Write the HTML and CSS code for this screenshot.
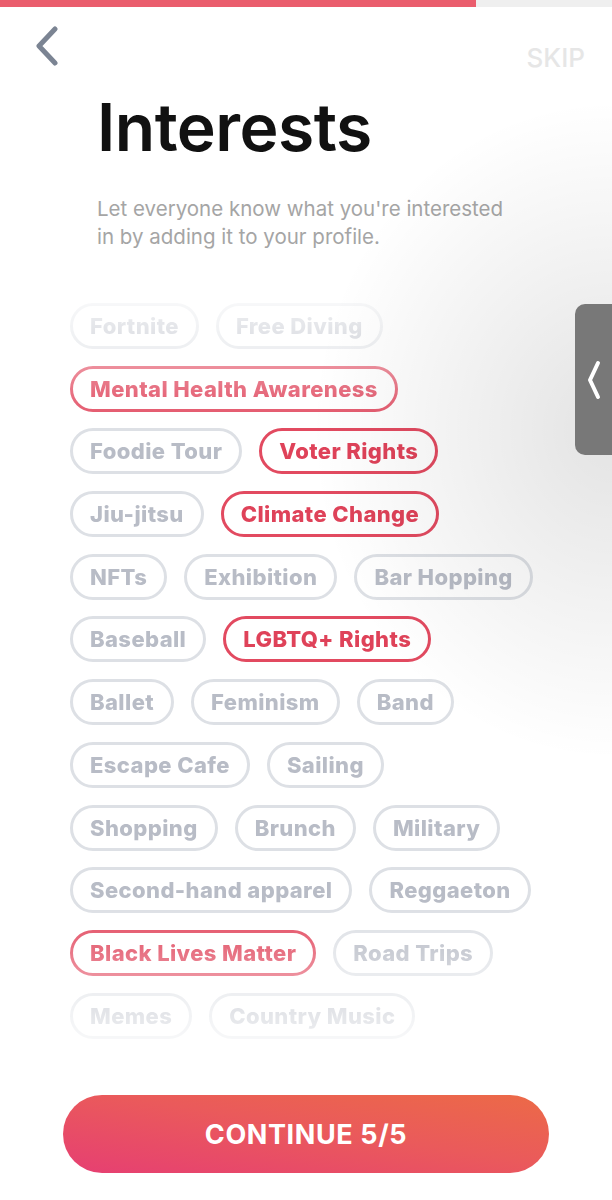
FILE: index.html
```html
<!DOCTYPE html>
<html lang="en">
  <head>
    <meta charset="UTF-8" />
    <meta name="viewport" content="width=device-width, initial-scale=1.0" />
    <title>Interests</title>
    <link rel="stylesheet" href="styles.css">
  </head>
  <body>
    <div class="screen">
      <!-- Step progress -->
      <div class="progress"><div class="progress-fill"></div></div>

      <!-- Top bar -->
      <div class="top-bar">
        <button class="back-btn" aria-label="Back">
          <svg width="30" height="40" viewBox="0 0 30 40">
            <polyline points="19,3 3,20 19,37" fill="none" stroke="#7b8493" stroke-width="5" stroke-linecap="round" stroke-linejoin="round" />
          </svg>
        </button>
        <span class="skip">SKIP</span>
      </div>

      <!-- Heading -->
      <div class="intro">
        <h1>Interests</h1>
        <p class="lead">Let everyone know what you're interested in by adding it to your profile.</p>
      </div>

      <!-- Interest chips -->
      <div class="chips">
        <div class="chip-row">
          <span class="chip">Fortnite</span>
          <span class="chip">Free Diving</span>
        </div>
        <div class="chip-row">
          <span class="chip selected">Mental Health Awareness</span>
        </div>
        <div class="chip-row">
          <span class="chip">Foodie Tour</span>
          <span class="chip selected">Voter Rights</span>
        </div>
        <div class="chip-row">
          <span class="chip">Jiu-jitsu</span>
          <span class="chip selected">Climate Change</span>
        </div>
        <div class="chip-row">
          <span class="chip">NFTs</span>
          <span class="chip">Exhibition</span>
          <span class="chip">Bar Hopping</span>
        </div>
        <div class="chip-row">
          <span class="chip">Baseball</span>
          <span class="chip selected">LGBTQ+ Rights</span>
        </div>
        <div class="chip-row">
          <span class="chip">Ballet</span>
          <span class="chip">Feminism</span>
          <span class="chip">Band</span>
        </div>
        <div class="chip-row">
          <span class="chip">Escape Cafe</span>
          <span class="chip">Sailing</span>
        </div>
        <div class="chip-row">
          <span class="chip">Shopping</span>
          <span class="chip">Brunch</span>
          <span class="chip">Military</span>
        </div>
        <div class="chip-row">
          <span class="chip">Second-hand apparel</span>
          <span class="chip">Reggaeton</span>
        </div>
        <div class="chip-row">
          <span class="chip selected">Black Lives Matter</span>
          <span class="chip">Road Trips</span>
        </div>
        <div class="chip-row">
          <span class="chip">Memes</span>
          <span class="chip">Country Music</span>
        </div>
      </div>

      <!-- Footer button -->
      <div class="footer">
        <button class="continue-btn">CONTINUE 5/5</button>
      </div>

      <!-- Screen edge shading + side handle -->
      <div class="edge-shade"></div>
      <div class="side-handle">
        <svg width="14" height="40" viewBox="0 0 14 40">
          <polyline points="11,3 3,20 11,37" fill="none" stroke="#fff" stroke-width="4" stroke-linecap="round" stroke-linejoin="round" />
        </svg>
      </div>
    </div>
  </body>
</html>
```

FILE: styles.css
```css
/* Page base */
body {
  margin: 0;
  background-color: #fff;
  font-family: 'Inter', 'Noto Sans', sans-serif;
}

.screen {
  position: relative;
  width: 612px;
  height: 1200px;
  display: flex;
  flex-direction: column;
  overflow: hidden;
  background-color: #fff;
}

/* Progress bar at the very top */
.progress {
  height: 7px;
  background-color: #efefef;
  flex-shrink: 0;
}

.progress-fill {
  width: 476px;
  height: 100%;
  background-color: #ea5d6d;
}

/* Back arrow and skip */
.top-bar {
  display: flex;
  justify-content: space-between;
  align-items: flex-start;
  padding: 19px 27px 0 36px;
  flex-shrink: 0;
}

.back-btn {
  padding: 0;
  border: none;
  background: none;
  width: 30px;
  height: 40px;
  cursor: pointer;
}

.back-btn svg {
  display: block;
}

.skip {
  margin-top: 19px;
  font-size: 26px;
  font-weight: 500;
  line-height: 1;
  color: #e6e6e6;
}

/* Heading */
.intro {
  padding: 0 60px 0 97px;
  flex-shrink: 0;
}

h1 {
  margin: 23px 0 0;
  font-size: 66px;
  font-weight: 600;
  line-height: 1;
  color: #111;
  letter-spacing: -0.5px;
}

.lead {
  margin: 35px 0 0;
  font-size: 20.5px;
  line-height: 28px;
  color: #a5a5a5;
  max-width: 415px;
}

/* Chips list, faded at the top and bottom */
.chips {
  flex: 1;
  min-height: 0;
  overflow: hidden;
  margin-top: 38px;
  padding: 14px 0 0 70px;
  -webkit-mask-image: linear-gradient(to bottom, rgba(0, 0, 0, 0.15) 0, #000 140px, #000 620px, rgba(0, 0, 0, 0.03) 100%);
  mask-image: linear-gradient(to bottom, rgba(0, 0, 0, 0.15) 0, #000 140px, #000 620px, rgba(0, 0, 0, 0.03) 100%);
}

.chip-row {
  display: flex;
  gap: 17px;
  margin-bottom: 16.7px;
}

.chip {
  display: inline-flex;
  align-items: center;
  box-sizing: border-box;
  height: 46px;
  padding: 0 17px;
  border: 3px solid #dde0e5;
  border-radius: 23px;
  background-color: #fff;
  font-size: 22px;
  font-weight: 800;
  letter-spacing: 0.4px;
  color: #b8bcc6;
  white-space: nowrap;
}

.chip.selected {
  border-color: #e24a60;
  color: #df4259;
}

/* Continue button */
.footer {
  padding: 20px 63px 27px;
  flex-shrink: 0;
}

.continue-btn {
  display: block;
  width: 100%;
  height: 78px;
  border: none;
  border-radius: 39px;
  background: linear-gradient(to top right, #e63f72, #ea5a5b 55%, #ec6a47);
  color: #fff;
  font-family: inherit;
  font-size: 27px;
  font-weight: 700;
  letter-spacing: 0.6px;
  cursor: pointer;
}

/* Soft shadow cast on the right edge */
.edge-shade {
  position: absolute;
  top: 80px;
  right: 0;
  width: 300px;
  height: 700px;
  background: radial-gradient(ellipse 300px 330px at 100% 50%, rgba(0, 0, 0, 0.11), rgba(0, 0, 0, 0) 100%);
  pointer-events: none;
}

/* Drawer handle on the right */
.side-handle {
  position: absolute;
  top: 304px;
  right: 0;
  width: 37px;
  height: 151px;
  display: flex;
  align-items: center;
  padding-left: 12px;
  box-sizing: border-box;
  border-radius: 10px 0 0 10px;
  background-color: #787878;
}
```
